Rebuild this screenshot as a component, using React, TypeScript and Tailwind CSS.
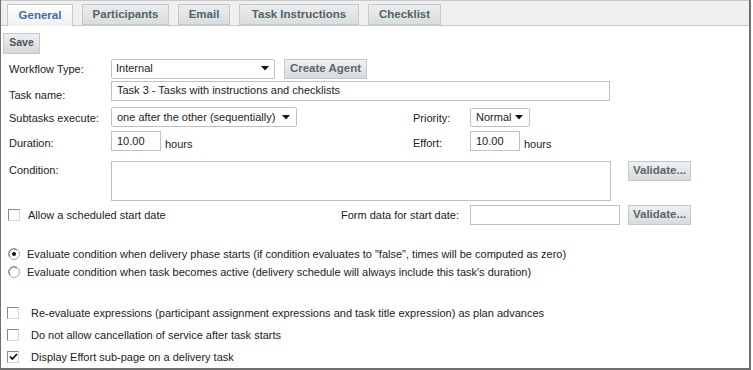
import React from "react";

const Arrow = () => (
  <svg width="8" height="5" viewBox="0 0 8 5" className="shrink-0">
    <path d="M0 0 L8 0 L4 4.5 Z" fill="#111" />
  </svg>
);

const Check = ({ checked = false }: { checked?: boolean }) => (
  <div className="w-[12px] h-[12px] shrink-0 border border-t-[#8a8a8a] border-l-[#8a8a8a] border-r-[#d8d8d8] border-b-[#d8d8d8] bg-white flex items-center justify-center">
    {checked && (
      <svg width="9" height="8" viewBox="0 0 9 8">
        <path d="M1 3.5 L3.3 6 L8 1" stroke="#111" strokeWidth="1.8" fill="none" />
      </svg>
    )}
  </div>
);

const Radio = ({ on = false }: { on?: boolean }) => (
  <svg width="12" height="12" viewBox="0 0 12 12" className="shrink-0">
    <circle cx="6" cy="6" r="5.5" fill="#fff" stroke="#a8a8a8" />
    <path d="M2 9 A5 5 0 0 1 9 2" stroke="#7a7a7a" fill="none" />
    {on && <circle cx="6" cy="6" r="2" fill="#111" />}
  </svg>
);

const Btn = ({ children, w }: { children: React.ReactNode; w: string }) => (
  <div
    className={`${w} h-[20px] shrink-0 border border-[#c4c8c8] bg-gradient-to-b from-[#edf1f1] to-[#d6dcdc] text-[#5a6670] font-bold text-[11.5px] flex items-center justify-center`}
  >
    {children}
  </div>
);

export default function App() {
  const tabs = [
    { t: "Participants", w: "w-[87px]" },
    { t: "Email", w: "w-[52px]" },
    { t: "Task Instructions", w: "w-[120px]" },
    { t: "Checklist", w: "w-[73px]" },
  ];
  return (
    <div className="w-[753px] h-[370px] bg-white font-['Liberation_Sans',Arial,sans-serif] text-[11px] text-[#222]">
      <div className="w-[751px] h-[370px] border-l border-r-2 border-b-2 border-[#6f6f6f] flex flex-col">
        {/* tab bar */}
        <div className="h-[26px] shrink-0 bg-[#f0f0f0] border-t border-b border-[#c8c8c8] flex items-end pl-[6px] gap-[9px]">
          <div className="w-[66px] h-[22px] -mb-px border border-b-0 border-[#c8c8c8] bg-gradient-to-b from-[#ffffff] to-[#f0f0f0] text-[#3a6db0] font-bold text-[11.5px] flex items-center justify-center">
            General
          </div>
          {tabs.map((x) => (
            <div
              key={x.t}
              className={`${x.w} h-[21px] border border-[#c8c8c8] bg-gradient-to-b from-[#e9eded] to-[#d8dede] text-[#596066] font-bold text-[11.5px] flex items-center justify-center`}
            >
              {x.t}
            </div>
          ))}
        </div>

        {/* Save */}
        <div className="mt-[7px] ml-[2px] w-[37px] h-[21px] border border-[#c4c8c8] bg-gradient-to-b from-[#eef0f0] to-[#d4d8d8] text-[#4d5560] font-bold text-[10.5px] flex items-center justify-center">
          Save
        </div>

        {/* Workflow type */}
        <div className="mt-[5px] h-[21px] flex items-center">
          <div className="ml-[8px] w-[102px]">Workflow Type:</div>
          <div className="w-[164px] h-[20px] self-start border border-[#c0c0c0] rounded-[2px] flex items-center justify-between pl-[4px] pr-[5px]">
            <span>Internal</span>
            <Arrow />
          </div>
          <div className="ml-[9px]">
            <Btn w="w-[83px]">Create Agent</Btn>
          </div>
        </div>

        {/* Task name */}
        <div className="mt-[2px] h-[20px] flex items-center">
          <div className="ml-[8px] w-[102px] pt-[8px]">Task name:</div>
          <div className="w-[499px] h-[20px] border border-[#c0c0c0] flex items-center pl-[5px] pb-[1px]">
            Task 3 - Tasks with instructions and checklists
          </div>
        </div>

        {/* Subtasks + Priority */}
        <div className="mt-[6px] h-[20px] flex items-center">
          <div className="ml-[8px] w-[102px] pt-[3px]">Subtasks execute:</div>
          <div className="w-[302px] flex">
            <div className="w-[186px] h-[20px] border border-[#c0c0c0] rounded-[2px] flex items-center justify-between pl-[5px] pr-[6px]">
              <span>one after the other (sequentially)</span>
              <Arrow />
            </div>
          </div>
          <div className="w-[57px] pt-[3px]">Priority:</div>
          <div className="w-[60px] h-[19px] border border-[#c0c0c0] rounded-[2px] flex items-center justify-between pl-[5px] pr-[6px]">
            <span>Normal</span>
            <Arrow />
          </div>
        </div>

        {/* Duration + Effort */}
        <div className="mt-[4px] h-[20px] flex items-center">
          <div className="ml-[8px] w-[102px] pt-[5px]">Duration:</div>
          <div className="w-[302px] flex items-center">
            <div className="w-[50px] h-[20px] border border-[#c0c0c0] flex items-start pt-[1px] pl-[5px]">10.00</div>
            <div className="ml-[4px] pt-[6px]">hours</div>
          </div>
          <div className="w-[57px] pt-[5px]">Effort:</div>
          <div className="w-[50px] h-[20px] border border-[#c0c0c0] flex items-start pt-[1px] pl-[5px]">10.00</div>
          <div className="ml-[4px] pt-[6px]">hours</div>
        </div>

        {/* Condition */}
        <div className="mt-[10px] h-[40px] flex items-start">
          <div className="ml-[8px] w-[102px] pt-[1px]">Condition:</div>
          <div className="w-[500px] h-[40px] border border-[#c0c0c0]" />
          <div className="ml-[17px]">
            <Btn w="w-[63px]">Validate...</Btn>
          </div>
        </div>

        {/* Scheduled start */}
        <div className="mt-[4px] h-[20px] flex items-center">
          <div className="ml-[7px] w-[333px] flex items-center">
            <Check />
            <span className="ml-[8px]">Allow a scheduled start date</span>
          </div>
          <div className="w-[129px]">Form data for start date:</div>
          <div className="w-[150px] h-[20px] border border-[#c0c0c0]" />
          <div className="ml-[8px]">
            <Btn w="w-[63px]">Validate...</Btn>
          </div>
        </div>

        {/* radios */}
        <div className="mt-[20px] flex flex-col">
          <div className="h-[18px] flex items-center ml-[7px]">
            <Radio on />
            <span className="ml-[7px]">
              Evaluate condition when delivery phase starts (if condition evaluates to "false", times will be computed as zero)
            </span>
          </div>
          <div className="h-[18px] flex items-center ml-[7px]">
            <Radio />
            <span className="ml-[7px]">
              Evaluate condition when task becomes active (delivery schedule will always include this task's duration)
            </span>
          </div>
        </div>

        {/* checkboxes */}
        <div className="mt-[21px] flex flex-col">
          {[
            { t: "Re-evaluate expressions (participant assignment expressions and task title expression) as plan advances", c: false },
            { t: "Do not allow cancellation of service after task starts", c: false },
            { t: "Display Effort sub-page on a delivery task", c: true },
          ].map((r) => (
            <div key={r.t} className="h-[22px] flex items-center ml-[6px]">
              <Check checked={r.c} />
              <span className="ml-[12px]">{r.t}</span>
            </div>
          ))}
        </div>
      </div>
    </div>
  );
}
